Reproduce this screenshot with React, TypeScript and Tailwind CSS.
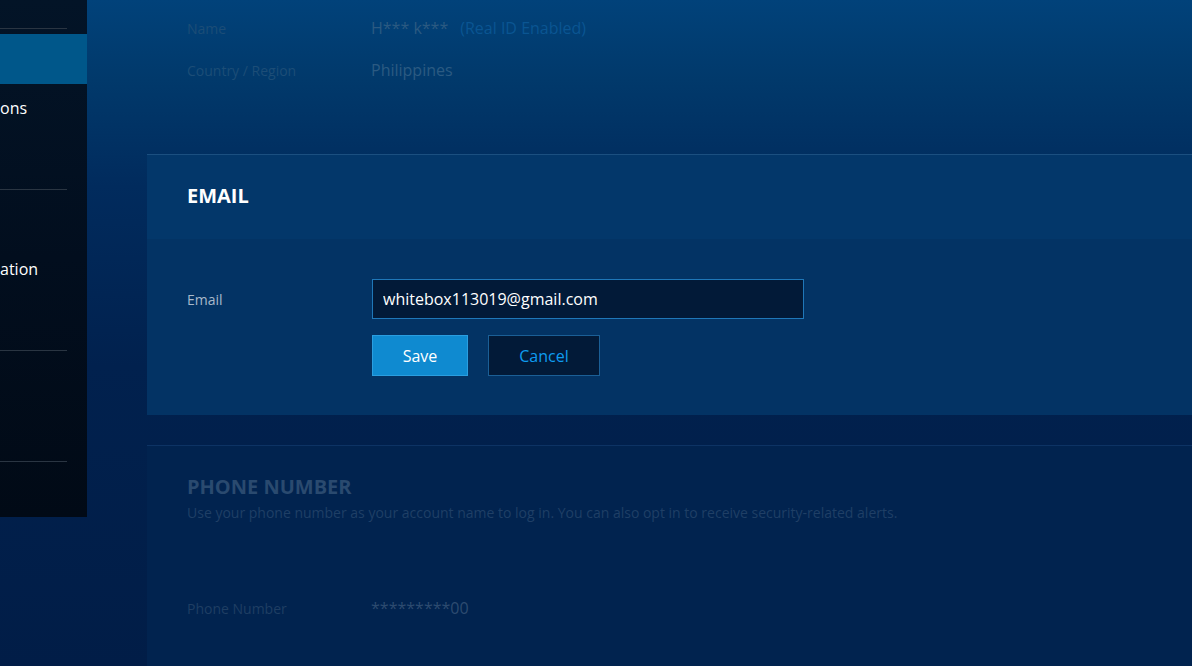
export default function App() {
  return (
    <div className="w-full h-[666px] overflow-hidden flex items-start bg-[linear-gradient(180deg,#01427a_0%,#01396b_12%,#012b5d_28%,#01214e_55%,#011d47_100%)] font-['Open_Sans',sans-serif]">
      {/* sidebar, scrolled off to the left */}
      <div className="w-[87px] h-[517px] shrink-0 flex flex-col bg-[linear-gradient(180deg,#031427_0%,#020e1e_50%,#010a16_100%)] text-white text-[16px]">
        <div className="h-[28px]" />
        <div className="w-[67px] h-px bg-[#2a3542]" />
        <div className="h-[5px]" />
        <div className="h-[50px] bg-[#00578a]" />
        <div className="h-[14px]" />
        <div className="h-[20px] leading-[20px]">ons</div>
        <div className="h-[71px]" />
        <div className="w-[67px] h-px bg-[#2a3542]" />
        <div className="h-[69px]" />
        <div className="h-[20px] leading-[20px]">ation</div>
        <div className="h-[71px]" />
        <div className="w-[67px] h-px bg-[#2a3542]" />
        <div className="h-[110px]" />
        <div className="w-[67px] h-px bg-[#2a3542]" />
      </div>

      <div className="flex-1 flex flex-col pl-[60px]">
        {/* dimmed account rows */}
        <div className="flex flex-col gap-[22px] pt-[18px] pl-[40px]">
          <div className="flex items-center h-[20px]">
            <span className="w-[184px] text-[14px] text-[#1c4d77]">Name</span>
            <span className="text-[16px] text-[#2b5a82]">H*** k***</span>
            <span className="ml-[12px] text-[16px] text-[#0a5592]">(Real ID Enabled)</span>
          </div>
          <div className="flex items-center h-[20px]">
            <span className="w-[184px] text-[14px] text-[#1c4d77]">Country / Region</span>
            <span className="text-[16px] text-[#2b5a82]">Philippines</span>
          </div>
        </div>

        {/* email panel */}
        <div className="mt-[74px] border-t border-[#1b4f80]">
          <div className="h-[84px] pt-[27px] pl-[40px] bg-[#03376a]">
            <h2 className="text-[20px] leading-[28px] font-bold text-white">EMAIL</h2>
          </div>
          <div className="h-[176px] pt-[40px] pl-[40px] bg-[#033364]">
            <div className="flex items-center">
              <label className="w-[185px] text-[14px] text-[#a8b9cb]">Email</label>
              <input
                defaultValue="whitebox113019@gmail.com"
                className="w-[432px] h-[40px] px-[10px] bg-[#021a38] border border-[#1f77b8] text-white text-[16px] outline-none"
              />
            </div>
            <div className="flex gap-[20px] mt-[16px] ml-[185px]">
              <button className="w-[96px] h-[41px] bg-[#0f8ad0] border border-[#2a9ee0] text-white text-[16px]">
                Save
              </button>
              <button className="w-[112px] h-[41px] bg-[#021a38] border border-[#1b5f96] text-[#0e9cf0] text-[16px]">
                Cancel
              </button>
            </div>
          </div>
        </div>

        {/* phone panel, dimmed */}
        <div className="mt-[30px] h-[260px] border-t border-[#0d3364] bg-[#01234f] pt-[27px] pl-[40px]">
          <h2 className="text-[20px] leading-[28px] font-bold text-[#2a4a6f]">PHONE NUMBER</h2>
          <p className="mt-[2px] text-[14px] leading-[20px] text-[#1f3f66]">
            Use your phone number as your account name to log in. You can also opt in to receive security-related alerts.
          </p>
          <div className="flex items-center h-[20px] mt-[75px]">
            <span className="w-[184px] text-[14px] text-[#1f3e63]">Phone Number</span>
            <span className="text-[16px] text-[#2d4b70]">*********00</span>
          </div>
        </div>
      </div>
    </div>
  );
}
